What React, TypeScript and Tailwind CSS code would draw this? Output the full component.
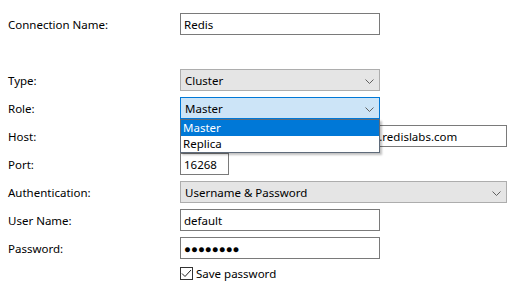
import React from "react";

const font = { fontFamily: '"Noto Sans", "Open Sans", sans-serif' };

function Chevron() {
  return (
    <svg width="9" height="5" viewBox="0 0 9 5" className="shrink-0 mt-[2px]">
      <polyline points="0.5,0.5 4.5,4.5 8.5,0.5" fill="none" stroke="#606060" strokeWidth="1" />
    </svg>
  );
}

function Row({ label, children }: { label: string; children: React.ReactNode }) {
  return (
    <div className="flex items-center h-[22px]">
      <div className="w-[180px] pl-2 pt-[2px] shrink-0 text-[11.5px] text-black leading-none">{label}</div>
      {children}
    </div>
  );
}

function TextBox({ value, width, clip }: { value: string; width: string; clip?: boolean }) {
  return (
    <div className={`${width} h-[22px] border border-[#7a7a7a] bg-white flex items-center px-[3px] pt-[2px] text-[11.5px] leading-none text-black whitespace-nowrap ${clip ? "overflow-hidden" : ""}`}>
      {value}
    </div>
  );
}

function Select({ value, width, open }: { value: string; width: string; open?: boolean }) {
  return (
    <div className={`${width} h-[22px] border flex items-center justify-between pl-[4px] pr-[5px] text-[11.5px] leading-none text-black ${open ? "bg-[#cce4f7] border-[#0078d7]" : "bg-[#e5e5e5] border-[#adadad]"}`}>
      <span className="pt-[2px]">{value}</span>
      <Chevron />
    </div>
  );
}

export default function App() {
  return (
    <div className="relative w-[515px] h-[283px] bg-white overflow-hidden pt-[13px]" style={font}>
      <Row label="Connection Name:">
        <TextBox value="Redis" width="w-[200px]" />
      </Row>

      <div className="flex flex-col gap-[6px] mt-[34px]">
        <Row label="Type:">
          <Select value="Cluster" width="w-[200px]" />
        </Row>
        <Row label="Role:">
          <Select value="Master" width="w-[200px]" open />
        </Row>
        <Row label="Host:">
          <TextBox value="redis-16268.c1.us-east-1-2.ec2.cloud.redislabs.com" width="w-[327px]" clip />
        </Row>
        <Row label="Port:">
          <TextBox value="16268" width="w-[49px]" />
        </Row>
        <Row label="Authentication:">
          <Select value="Username & Password" width="w-[327px]" />
        </Row>
        <Row label="User Name:">
          <TextBox value="default" width="w-[200px]" />
        </Row>
        <Row label="Password:">
          <TextBox value="●●●●●●●●" width="w-[200px]" />
        </Row>
      </div>

      <div className="flex items-center mt-[7px] pl-[180px] h-[14px]">
        <div className="w-[13px] h-[13px] border border-[#333333] bg-white flex items-center justify-center">
          <svg width="11" height="9" viewBox="0 0 11 9">
            <polyline points="1,4.5 4,7.5 10,1" fill="none" stroke="#222222" strokeWidth="1" />
          </svg>
        </div>
        <span className="ml-[3px] pt-[1px] text-[11.5px] leading-none text-black">Save password</span>
      </div>

      {/* open dropdown list for Role */}
      <div className="absolute top-[119px] left-[180px] w-[200px] border border-[#5f6b7a] bg-white shadow-[2px_2px_2px_rgba(0,0,0,0.25)] text-[11.5px] leading-[16px]">
        <div className="bg-[#0078d7] text-white pl-[2px]">Master</div>
        <div className="text-black pl-[2px]">Replica</div>
      </div>
    </div>
  );
}
